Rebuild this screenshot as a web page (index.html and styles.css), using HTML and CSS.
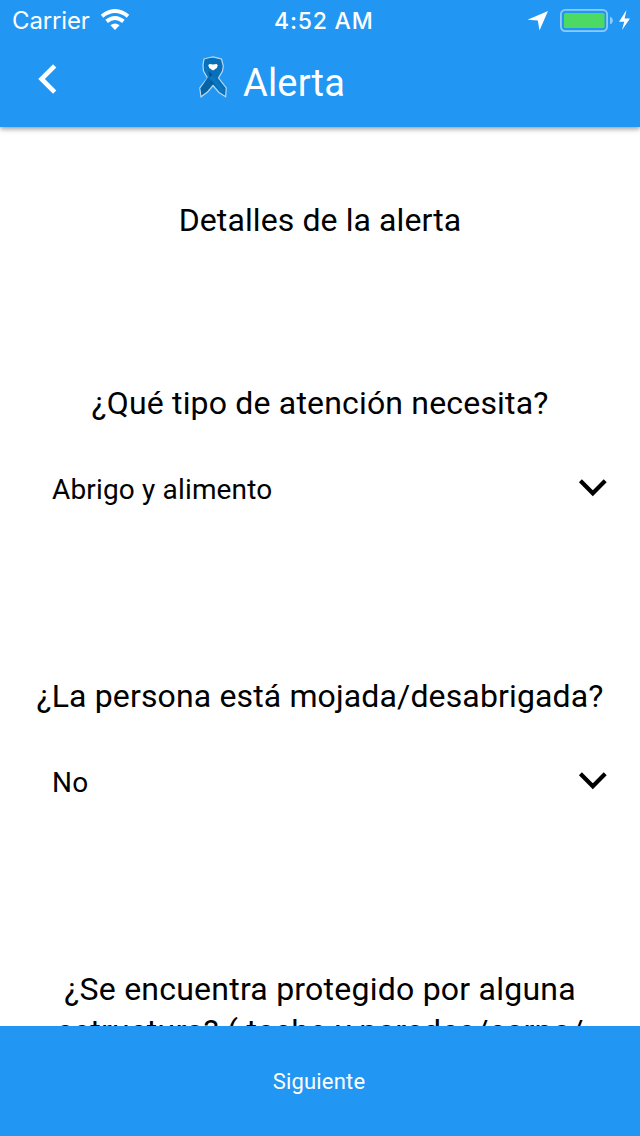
FILE: index.html
```html
<!DOCTYPE html>
<html lang="es">
<head>
<meta charset="utf-8">
<title>Alerta</title>
<link rel="stylesheet" href="styles.css">
</head>
<body>
<div class="screen">
  <header class="header">
    <div class="status">
      <span class="carrier">Carrier</span>
      <svg class="wifi" width="30" height="22" viewBox="0 0 30 22" fill="none" stroke="#fff" stroke-width="4"><path d="M2 7.2Q15-3.1 28 7.2"/><path d="M6.6 12.4Q15 5.6 23.4 12.4"/><path d="M10.4 16.2Q15 12.6 19.6 16.2L15 21Z" fill="#fff" stroke="none"/></svg>
      <span class="clock">4:52 AM</span>
      <svg class="power" width="106" height="26" viewBox="0 0 106 26"><path d="M21 3L0.5 11.7L10.8 12.5L12.5 22.5Z" fill="#fff"/><rect x="33.9" y="1.9" width="46.2" height="21.2" rx="4.5" fill="none" stroke="#90cbf9" stroke-width="1.8"/><rect x="37" y="5" width="40.5" height="15" rx="1.5" fill="#4cd964"/><path d="M83 8.5Q86 10 86 12.5Q86 15 83 16.5Z" fill="#90cbf9"/><path d="M99.5 2L92 13.8H97.2L95 22L103 10.5H97.6Z" fill="#fff"/></svg>
    </div>
    <div class="titlebar">
      <svg class="back" width="20" height="32" viewBox="0 0 20 32"><path d="M17.7 2.8L4.5 16L17.7 29.2" fill="none" stroke="#fff" stroke-width="4.6"/></svg>
      <svg class="ribbon" width="28" height="42" viewBox="0 0 28 42"><path d="M5 3L10.5 1.5L14 .8L18 1.8L22.5 3L24.3 10L23.5 15L19.5 22L27.3 32L26.6 40.8L20 36.5L14 29.5L8.5 36L2 40.8L.8 32L8.5 22L4.5 15L4 9Z" fill="#0870ba" stroke="#b9d8ee" stroke-width="1.2"/><path d="M9 21L14 28L8 35L2.5 39L1.7 32.5Z" fill="#0763a8"/><path d="M6 11Q9 18 16 25L24 36" fill="none" stroke="#0878c5" stroke-width="3"/><path d="M9.3 15L13.5 18.5L10.8 21.5Z" fill="#064f8c"/><path d="M13 27L11 24L16 29Z" fill="#064a80"/><path d="M9.2 9.2L10.5 8L14 8.5L17.5 8L18.8 9.2L17.8 12L14 14.5L10.3 12Z" fill="#fff"/></svg>
      <h1 class="title">Alerta</h1>
    </div>
  </header>
  <main class="content">
    <h2 class="heading intro">Detalles de la alerta</h2>
    <section class="question">
      <h2 class="heading type">¿Qué tipo de atención necesita?</h2>
      <div class="select"><span>Abrigo y alimento</span><svg width="30" height="20" viewBox="0 0 30 20"><path d="M2.4 2.8L14.8 15.2L27.2 2.8" fill="none" stroke="#000" stroke-width="4.2"/></svg></div>
    </section>
    <section class="question">
      <h2 class="heading wet">¿La persona está mojada/desabrigada?</h2>
      <div class="select"><span>No</span><svg width="30" height="20" viewBox="0 0 30 20"><path d="M2.4 2.8L14.8 15.2L27.2 2.8" fill="none" stroke="#000" stroke-width="4.2"/></svg></div>
    </section>
    <section class="question">
      <h2 class="heading shelter">¿Se encuentra protegido por alguna<br>estructura? ( techo y paredes/carpa/</h2>
    </section>
  </main>
  <footer class="next">Siguiente</footer>
</div>
</body>
</html>
```
FILE: styles.css
```css
* { box-sizing: border-box; }
body { margin: 0; background: #fff; font-family: Roboto, sans-serif; color: #000; }
h1, h2 { margin: 0; font-weight: 400; white-space: nowrap; }
svg { display: block; flex: none; }
.screen { width: 640px; height: 1136px; display: flex; flex-direction: column; overflow: hidden; }
.header { height: 127px; flex: none; background: #2196f3; color: #fff; box-shadow: 0 2px 5px rgba(0,0,0,.4); z-index: 1; }
.status { height: 42px; display: grid; grid-template-columns: 88px 174px 1fr 112px; align-items: center; font-family: Inter, sans-serif; padding-left: 12px; }
.carrier { font-size: 24px; letter-spacing: -.15px; white-space: nowrap; margin-bottom: 2px; }
.wifi { margin-bottom: 2px; }
.power { margin-left: -1px; }
.clock { font-size: 23px; font-weight: 500; letter-spacing: .8px; white-space: nowrap; }
.titlebar { height: 85px; display: flex; align-items: flex-start; padding-left: 37px; }
.back { margin-top: 21px; }
.ribbon { margin: 14px 0 0 142px; }
.title { margin: 18px 0 0 16px; font-size: 38px; line-height: 46px; letter-spacing: .15px; }
.content { flex: 1; min-height: 0; overflow: hidden; padding-top: 74px; }
.heading { font-size: 32px; line-height: 38px; letter-spacing: .18px; text-align: center; }
.intro { letter-spacing: .1px; margin-bottom: 145px; }
.wet { letter-spacing: .14px; }
.shelter { line-height: 42px; margin-top: -2px; letter-spacing: .23px; }
.question { height: 293px; display: flow-root; }
.select { display: flex; align-items: center; justify-content: space-between; height: 38px; margin-top: 48px; padding: 0 32px 0 52px; font-size: 28px; letter-spacing: .16px; }
.select svg { margin-bottom: 2px; }
.next { height: 110px; flex: none; display: flex; align-items: center; justify-content: center; background: #2196f3; color: #fff; font-size: 22px; letter-spacing: .2px; padding-right: 2px; }
```
